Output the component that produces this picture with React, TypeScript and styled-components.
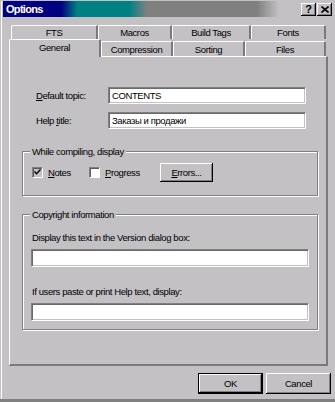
import React from 'react';
import styled, { createGlobalStyle } from 'styled-components';

const FACE = '#c3c1c3';
const SHADOW = '#808080';
const EDGE = '#7a7a7a';

const Global = createGlobalStyle`
  html, body { margin: 0; padding: 0; background: ${FACE}; }
  body {
    font-family: "Liberation Sans", Arial, sans-serif;
    font-size: 9.5px;
    letter-spacing: -0.4px;
    color: #000;
  }
  * { box-sizing: border-box; }
`;

const Window = styled.div`
  width: 335px;
  height: 402px;
  padding: 1px 0 0 1px;
  background: ${FACE};
  border-bottom: 3px solid ${SHADOW};
  overflow: hidden;
`;

const Frame = styled.div`
  height: 398px;
  border-left: 1px solid #fff;
  display: flex;
  flex-direction: column;
`;

const TitleBar = styled.div`
  margin-left: 1px;
  height: 16px;
  display: flex;
  align-items: center;
  padding: 0 3px 0 3px;
  background: linear-gradient(
    to right,
    #000080 0px,
    #000080 58px,
    #008080 74px,
    #008080 126px,
    #808080 144px,
    #808080 254px,
    #c3c1c3 276px,
    #c3c1c3 100%
  );
`;

const Title = styled.span`
  color: #fff;
  font-weight: bold;
  font-size: 11px;
  letter-spacing: -0.7px;
`;

const CaptionButtons = styled.div`
  margin-left: auto;
  display: flex;
  gap: 1px;
  margin-top: 1px;
`;

const CaptionButton = styled.div`
  width: 15px;
  height: 13px;
  background: ${FACE};
  box-shadow: inset -1px -1px #000, inset 1px 1px #fff, inset -2px -2px ${SHADOW};
  display: flex;
  align-items: center;
  justify-content: center;
  font-weight: bold;
  font-size: 11px;
  letter-spacing: 0;
  padding-bottom: 1px;
`;

const Tabs = styled.div`
  margin: 8px 0 0 7px;
  display: flex;
  flex-direction: column;
`;

const TabRowBack = styled.div`
  display: flex;
  padding-left: 2px;
  height: 14px;
`;

const TabRowFront = styled.div`
  display: flex;
  height: 17px;
  align-items: flex-start;
`;

const Tab = styled.div<{ $w: number; $selected?: boolean; $front?: boolean }>`
  width: ${(p) => p.$w}px;
  height: ${(p) => (p.$selected ? 18 : p.$front ? 15 : 14)}px;
  margin-top: ${(p) => (p.$front && !p.$selected ? 2 : 0)}px;
  background: ${FACE};
  border-top: 1px solid #fff;
  border-left: 1px solid #fff;
  border-right: 2px solid ${EDGE};
  border-top-left-radius: 2px;
  border-top-right-radius: 2px;
  display: flex;
  align-items: center;
  justify-content: center;
  padding-bottom: ${(p) => (p.$selected ? 2 : 0)}px;
  position: relative;
  z-index: ${(p) => (p.$selected ? 1 : 0)};
`;

const Panel = styled.div`
  width: 319px;
  height: 310px;
  margin-left: 7px;
  background: ${FACE};
  border-top: 1px solid #fff;
  border-left: 1px solid #fff;
  border-right: 2px solid ${EDGE};
  border-bottom: 2px solid ${EDGE};
  display: flex;
  flex-direction: column;
`;

const FieldRow = styled.div<{ $mt: number }>`
  display: flex;
  align-items: center;
  margin-top: ${(p) => p.$mt}px;
  padding-left: 26px;
`;

const Label = styled.label`
  width: 72px;
`;

const TextField = styled.div<{ $w: number; $h: number }>`
  width: ${(p) => p.$w}px;
  height: ${(p) => p.$h}px;
  background: #fff;
  border-top: 1px solid ${SHADOW};
  border-left: 1px solid ${SHADOW};
  border-right: 1px solid #fff;
  border-bottom: 1px solid #fff;
  box-shadow: inset 1px 1px #6a6a6a, inset -1px -1px ${FACE};
  display: flex;
  align-items: center;
  padding-left: 3px;
  white-space: nowrap;
`;

const GroupBox = styled.div<{ $mt: number; $h: number }>`
  position: relative;
  margin: ${(p) => p.$mt}px 0 0 12px;
  width: 296px;
  height: ${(p) => p.$h}px;
  border: 1px solid ${SHADOW};
  box-shadow: inset 1px 1px #fff, 1px 1px #fff;
  padding: 0 8px;
  display: flex;
  flex-direction: column;
`;

const Legend = styled.span`
  position: absolute;
  top: -6px;
  left: 7px;
  padding: 0 2px 0 2px;
  background: ${FACE};
  line-height: 11px;
`;

const CheckRow = styled.div`
  display: flex;
  align-items: center;
  margin-top: 11px;
  padding-left: 1px;
  height: 19px;
`;

const CheckItem = styled.div<{ $w: number }>`
  width: ${(p) => p.$w}px;
  display: flex;
  align-items: center;
  gap: 5px;
`;

const CheckBox = styled.div<{ $checked?: boolean }>`
  width: 11px;
  height: 11px;
  background: ${(p) => (p.$checked ? FACE : '#fff')};
  border-top: 1px solid ${SHADOW};
  border-left: 1px solid ${SHADOW};
  border-right: 1px solid #fff;
  border-bottom: 1px solid #fff;
  box-shadow: inset 1px 1px #5a5a5a;
  display: flex;
  align-items: center;
  justify-content: center;
`;

const PushButton = styled.div<{ $w: number; $h: number; $default?: boolean }>`
  width: ${(p) => p.$w}px;
  height: ${(p) => p.$h}px;
  background: ${FACE};
  border: ${(p) => (p.$default ? '1px solid #000' : 'none')};
  box-shadow: ${(p) =>
    p.$default
      ? `inset -1px -1px #000, inset 1px 1px #fff, inset -2px -2px ${SHADOW}`
      : `inset -1px -1px #000, inset 1px 1px #fff, inset -2px -2px ${SHADOW}`};
  display: flex;
  align-items: center;
  justify-content: center;
  padding-bottom: 1px;
`;

const Text = styled.div<{ $mt: number }>`
  margin-top: ${(p) => p.$mt}px;
  margin-left: 1px;
  line-height: 12px;
  white-space: nowrap;
`;

const Spacer = styled.div<{ $h: number }>`
  height: ${(p) => p.$h}px;
  flex: none;
`;

const ButtonRow = styled.div`
  display: flex;
  justify-content: flex-end;
  gap: 3px;
  margin-top: 7px;
  padding-right: 4px;
`;

const Check = () => (
  <svg width="7" height="7" viewBox="0 0 7 7">
    <path d="M0.5 2.5 L2.5 4.8 L6.5 0.5" fill="none" stroke="#000" strokeWidth="1.4" />
  </svg>
);

const CloseGlyph = () => (
  <svg width="8" height="7" viewBox="0 0 8 7">
    <path d="M0.5 0.5 L7.5 6.5 M7.5 0.5 L0.5 6.5" stroke="#000" strokeWidth="1.6" />
  </svg>
);

export default function App() {
  return (
    <>
      <Global />
      <Window>
        <Frame>
          <TitleBar>
            <Title>Options</Title>
            <CaptionButtons>
              <CaptionButton>?</CaptionButton>
              <CaptionButton>
                <CloseGlyph />
              </CaptionButton>
            </CaptionButtons>
          </TitleBar>
          <Tabs>
            <TabRowBack>
              <Tab $w={87}>FTS</Tab>
              <Tab $w={74}>Macros</Tab>
              <Tab $w={79}>Build Tags</Tab>
              <Tab $w={75}>Fonts</Tab>
            </TabRowBack>
            <TabRowFront>
              <Tab $w={92} $front $selected>
                General
              </Tab>
              <Tab $w={72} $front>
                Compression
              </Tab>
              <Tab $w={72} $front>
                Sorting
              </Tab>
              <Tab $w={81} $front>
                Files
              </Tab>
            </TabRowFront>
          </Tabs>
          <Panel>
            <FieldRow $mt={30}>
              <Label>
                <u>D</u>efault topic:
              </Label>
              <TextField $w={198} $h={17}>CONTENTS</TextField>
            </FieldRow>
            <FieldRow $mt={8}>
              <Label>
                Help <u>t</u>itle:
              </Label>
              <TextField $w={198} $h={17}>Заказы и продажи</TextField>
            </FieldRow>
            <GroupBox $mt={22} $h={45}>
              <Legend>While compiling, display</Legend>
              <CheckRow>
                <CheckItem $w={57}>
                  <CheckBox $checked>
                    <Check />
                  </CheckBox>
                  <span>
                    <u>N</u>otes
                  </span>
                </CheckItem>
                <CheckItem $w={71}>
                  <CheckBox />
                  <span>
                    <u>P</u>rogress
                  </span>
                </CheckItem>
                <PushButton $w={53} $h={19}>
                  <span>
                    <u>E</u>rrors...
                  </span>
                </PushButton>
              </CheckRow>
            </GroupBox>
            <GroupBox $mt={18} $h={116}>
              <Legend>Copyright information</Legend>
              <Spacer $h={17} />
              <Text $mt={0}>Display this text in the Version dialog box:</Text>
              <Spacer $h={5} />
              <TextField $w={278} $h={18} />
              <Text $mt={19}>If users paste or print Help text, display:</Text>
              <Spacer $h={5} />
              <TextField $w={278} $h={18} />
            </GroupBox>
          </Panel>
          <ButtonRow>
            <PushButton $w={65} $h={21} $default>
              OK
            </PushButton>
            <PushButton $w={65} $h={21}>
              Cancel
            </PushButton>
          </ButtonRow>
        </Frame>
      </Window>
    </>
  );
}
